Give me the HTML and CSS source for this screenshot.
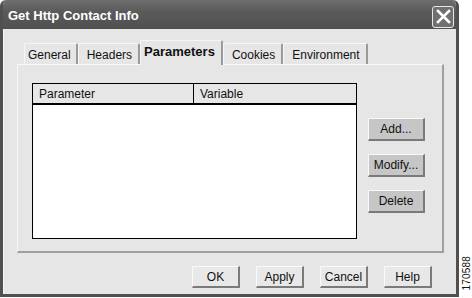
FILE: index.html
```html
<!DOCTYPE html>
<html lang="en">
<head>
    <meta charset="UTF-8">
    <title>Get Http Contact Info</title>
    <link rel="stylesheet" href="styles.css">
</head>
<body>
    <div class="page">
        <div class="window">
            <div class="title-bar">
                <span class="title">Get Http Contact Info</span>
                <span class="close-btn">
                    <svg width="15" height="15" viewBox="0 0 15 15">
                        <path d="M2 2 L13 13 M13 2 L2 13" stroke="#fff" stroke-width="2.6" stroke-linecap="square"/>
                    </svg>
                </span>
            </div>
            <div class="content">
                <div class="tabs">
                    <div class="tab first">General</div>
                    <div class="tab">Headers</div>
                    <div class="tab active">Parameters</div>
                    <div class="tab">Cookies</div>
                    <div class="tab">Environment</div>
                </div>
                <div class="panel">
                    <div class="list">
                        <div class="list-head">
                            <div class="col col-param">Parameter</div>
                            <div class="col">Variable</div>
                        </div>
                        <div class="list-body"></div>
                    </div>
                    <div class="side-buttons">
                        <button class="btn side">Add...</button>
                        <button class="btn side">Modify...</button>
                        <button class="btn side">Delete</button>
                    </div>
                </div>
                <div class="footer">
                    <button class="btn foot">OK</button>
                    <button class="btn foot">Apply</button>
                    <button class="btn foot">Cancel</button>
                    <button class="btn foot">Help</button>
                </div>
            </div>
        </div>
        <div class="fig-label">170588</div>
    </div>
</body>
</html>
```

FILE: styles.css
```css
* {
    margin: 0;
    padding: 0;
    box-sizing: border-box;
    font-family: 'Liberation Sans', Arial, sans-serif;
}

body {
    background: #fff;
    width: 472px;
    height: 298px;
    overflow: hidden;
}

.page {
    display: flex;
    height: 298px;
}

.window {
    width: 460px;
    height: 297px;
    background: #e6e6e6;
    border: 3px solid #505050;
    border-top: none;
    border-radius: 6px 6px 0 0;
    display: flex;
    flex-direction: column;
    overflow: hidden;
}

.title-bar {
    height: 29px;
    background: linear-gradient(#6e6e6e, #5a5a5a 40%, #505050);
    display: flex;
    align-items: center;
    justify-content: space-between;
    margin: 0 -3px;
    padding-left: 8px;
    padding-right: 5px;
}

.title {
    color: #fff;
    font-weight: bold;
    font-size: 13px;
    margin-top: 1px;
}

.close-btn {
    width: 22px;
    height: 22px;
    border: 1px solid #e8e8e8;
    border-radius: 3px;
    background: #707070;
    display: flex;
    align-items: center;
    justify-content: center;
    margin-top: 4px;
}

.content {
    flex: 1;
    border-left: 1px solid #f4f4f4;
    padding: 11px 0 0 13px;
    display: flex;
    flex-direction: column;
}

.tabs {
    display: flex;
    align-items: flex-end;
    padding-left: 7px;
    height: 24px;
    position: relative;
    z-index: 1;
}

.tab {
    height: 21px;
    padding: 2px 6px 0 8px;
    font-size: 12px;
    color: #111;
    display: flex;
    align-items: center;
    border-top: 1px solid #f6f6f6;
    border-left: 1px solid #f6f6f6;
    border-right: 2px solid #9a9a9a;
    border-radius: 2px 2px 0 0;
}

.tab.first {
    padding-left: 3px;
    padding-right: 5px;
}

.tab.active {
    height: 25px;
    margin-bottom: -1px;
    background: #e6e6e6;
    font-weight: bold;
    font-size: 13px;
    padding: 0 6px 4px 3px;
}

.panel {
    width: 427px;
    height: 189px;
    border-top: 1px solid #f8f8f8;
    border-left: 1px solid #f8f8f8;
    border-right: 2px solid #a0a0a0;
    border-bottom: 2px solid #a0a0a0;
    display: flex;
    padding: 18px 0 0 14px;
    gap: 11px;
}

.list {
    width: 325px;
    height: 156px;
    border: 1px solid #000;
    background: #fff;
    display: flex;
    flex-direction: column;
}

.list-head {
    height: 21px;
    display: flex;
    background: #e6e6e6;
    border-bottom: 2px solid #000;
}

.col {
    font-size: 12px;
    color: #111;
    padding-left: 6px;
    display: flex;
    align-items: center;
}

.col-param {
    width: 161px;
    border-right: 1px solid #000;
}

.list-body {
    flex: 1;
}

.side-buttons {
    display: flex;
    flex-direction: column;
    gap: 13px;
    padding-top: 35px;
}

.btn {
    font-size: 12px;
    color: #111;
    border: none;
    border-top: 1px solid #fafafa;
    border-left: 1px solid #fafafa;
    border-right: 2px solid #7a7a7a;
    border-bottom: 2px solid #7a7a7a;
}

.btn.side {
    width: 57px;
    height: 23px;
    background: #c6c6c6;
}

.footer {
    display: flex;
    gap: 16px;
    padding: 13px 0 0 175px;
}

.btn.foot {
    width: 48px;
    height: 22px;
    background: #e8e8e8;
}

.fig-label {
    align-self: flex-end;
    writing-mode: vertical-rl;
    transform: rotate(180deg);
    font-size: 10px;
    color: #111;
    margin: 0 0 7px 2px;
    letter-spacing: 0.2px;
}
```
